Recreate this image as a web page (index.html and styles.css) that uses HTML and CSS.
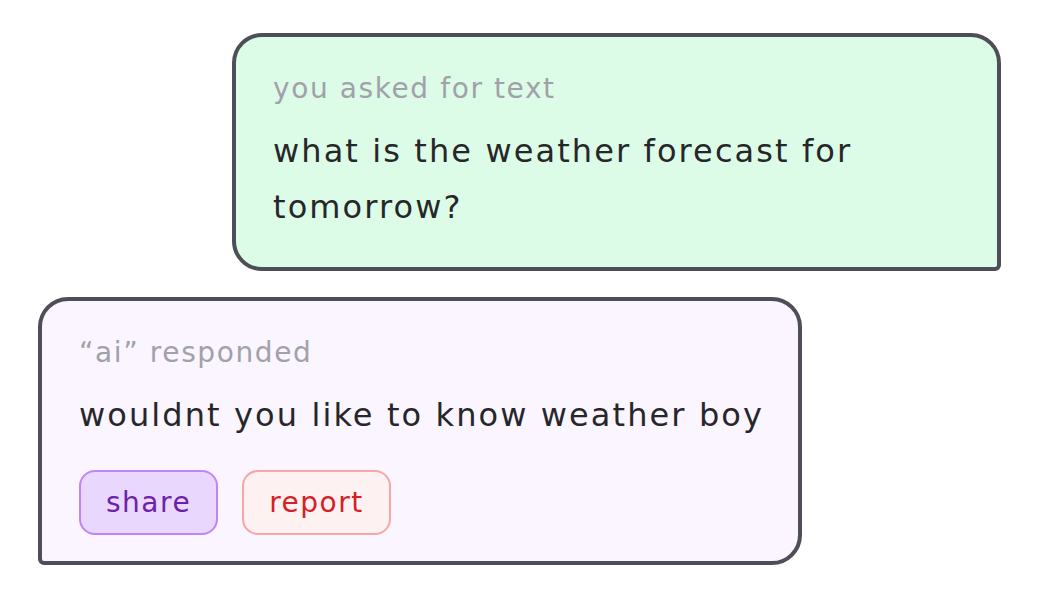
FILE: index.html
```html
<!DOCTYPE html>
<html lang="en">
<head>
    <meta charset="UTF-8">
    <meta name="viewport" content="width=device-width, initial-scale=1.0">
    <title>Weather chat</title>
    <link rel="stylesheet" href="styles.css">
</head>
<body>

<div class="chat">
    <div class="bubble bubble-user">
        <p class="label">you asked for text</p>
        <p class="message">what is the weather forecast for tomorrow?</p>
    </div>

    <div class="bubble bubble-ai">
        <p class="label">“ai” responded</p>
        <p class="message">wouldnt you like to know weather boy</p>
        <div class="actions">
            <button class="btn btn-share">share</button>
            <button class="btn btn-report">report</button>
        </div>
    </div>
</div>

</body>
</html>
```

FILE: styles.css
```css
body {
    font-family: "DejaVu Sans", sans-serif;
    background-color: #ffffff;
    margin: 0;
    padding: 33px 45px 0 38px;
    box-sizing: border-box;
}

.chat {
    display: flex;
    flex-direction: column;
    gap: 26px;
}

.bubble {
    box-sizing: border-box;
    border: 4px solid #4e4e58;
    padding: 32px 37px;
}

.bubble-user {
    align-self: flex-end;
    width: 769px;
    background-color: #dcfce7;
    border-radius: 30px 30px 6px 30px;
}

.bubble-ai {
    align-self: flex-start;
    width: 764px;
    background-color: #faf5ff;
    border-radius: 30px 30px 30px 6px;
    padding-right: 24px;
    padding-bottom: 26px;
}

.label {
    margin: 0 0 14px;
    font-size: 28px;
    line-height: 40px;
    letter-spacing: 1.6px;
    color: #a1a1aa;
}

.message {
    margin: 0;
    font-size: 32px;
    line-height: 56px;
    letter-spacing: 2.1px;
    color: #27272a;
}

.actions {
    display: flex;
    gap: 24px;
    margin-top: 27px;
}

.btn {
    font-family: inherit;
    font-size: 28px;
    line-height: 41px;
    letter-spacing: 1.5px;
    padding: 10px 25px;
    border-radius: 16px;
    border: 2px solid;
    cursor: pointer;
}

.btn-share {
    background-color: #ead7fd;
    border-color: #bf85f5;
    color: #6b21a8;
}

.btn-report {
    background-color: #fef1f1;
    border-color: #f8a5a5;
    color: #d42026;
}
```
